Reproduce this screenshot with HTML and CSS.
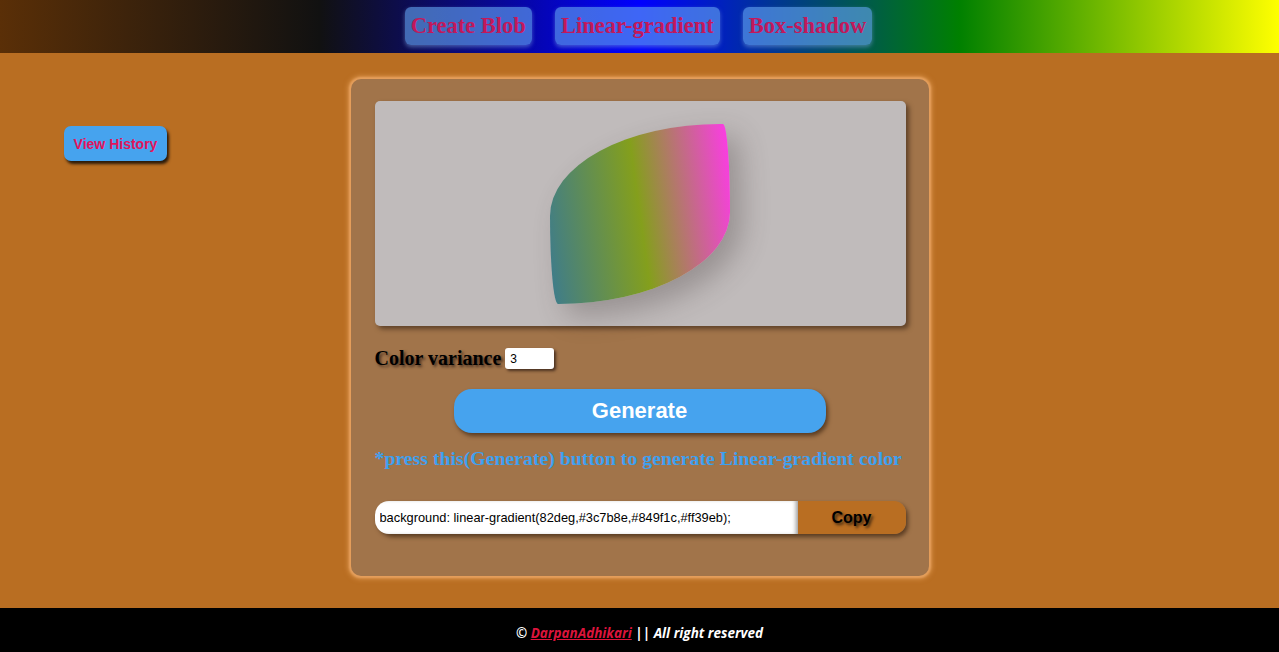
FILE: index.html
```html
<!DOCTYPE html>
<html lang="en">
<head>
<meta charset="utf-8">
<title>Linear-gradient</title>
<link rel="stylesheet" href="styles.css">
</head>
<body>
<header class="topbar">
  <a class="nav-btn" href="#">Create Blob</a>
  <a class="nav-btn" href="#">Linear-gradient</a>
  <a class="nav-btn" href="#">Box-shadow</a>
</header>
<main class="main">
  <div class="side">
    <button class="history-btn">View History</button>
  </div>
  <section class="panel">
    <div class="preview">
      <div class="blob"></div>
    </div>
    <div class="variance">
      <label class="variance-label" for="cv">Color variance</label>
      <input class="variance-input" id="cv" type="text" value="3">
    </div>
    <div class="gen-row">
      <button class="gen-btn">Generate</button>
    </div>
    <p class="hint">*press this(Generate) button to generate Linear-gradient color</p>
    <div class="code-row">
      <input class="code-input" type="text" value="background: linear-gradient(82deg,#3c7b8e,#849f1c,#ff39eb);">
      <button class="copy-btn">Copy</button>
    </div>
  </section>
  <div class="side"></div>
</main>
<footer class="footer">
  <span>© <a class="footer-link" href="#"> DarpanAdhikari</a> || All right reserved</span>
</footer>
</body>
</html>
```

FILE: styles.css
```css
* { box-sizing: border-box; }
html, body { margin: 0; padding: 0; }
body {
  background: #b96e22;
  font-family: "Liberation Serif", "Times New Roman", serif;
  height: 652px;
  overflow: hidden;
}
.topbar {
  height: 53px;
  background: linear-gradient(to right, #5a2f07, #111111 25%, #0000ff 50%, #008000 75%, #ffff00);
  display: flex;
  justify-content: center;
  align-items: flex-start;
  gap: 23px;
  padding-top: 7px;
  padding-right: 2px;
}
.nav-btn {
  display: block;
  height: 38px;
  line-height: 37px;
  padding: 0 6px;
  border-radius: 6px;
  background: rgba(100, 165, 240, 0.62);
  box-shadow: 0 2px 4px rgba(120, 160, 220, 0.55);
  color: #c2185b;
  font-family: "Liberation Serif", "Times New Roman", serif;
  font-weight: bold;
  font-size: 22.5px;
  text-decoration: none;
}
.main {
  height: 555px;
  display: grid;
  grid-template-columns: 1fr 578px 1fr;
  align-items: start;
  padding-top: 26px;
}
.side { padding-left: 64px; padding-top: 47px; }
.history-btn {
  width: 103px;
  height: 35px;
  border: none;
  border-radius: 7px;
  background: #46a3ee;
  color: #e3135c;
  font-family: "Liberation Sans", Arial, sans-serif;
  font-weight: bold;
  font-size: 14px;
  box-shadow: 2px 3px 3px #2a1a0a;
  padding: 0;
}
.panel {
  width: 578px;
  height: 497px;
  background: #a1744a;
  border-radius: 10px;
  box-shadow: 0 0 2px 2px #e59f5c, 0 0 5px 3px rgba(240, 170, 100, 0.6);
  padding: 22px 23px 0 24px;
}
.preview {
  height: 225px;
  background: #c0bbbb;
  border-radius: 5px;
  box-shadow: 3px 3px 5px #5e4128;
  display: flex;
  align-items: center;
  justify-content: center;
}
.blob {
  width: 180px;
  height: 180px;
  background: linear-gradient(82deg, #3c7b8e, #849f1c, #ff39eb);
  border-radius: 170px 7px 172px 8px / 92px 88px 92px 88px;
  box-shadow: 12px 12px 28px rgba(60, 50, 50, 0.3);
}
.variance {
  display: flex;
  align-items: center;
  gap: 4px;
  margin-top: 21px;
  height: 23px;
}
.variance-label {
  font-weight: bold;
  font-size: 20px;
  color: #000;
  text-shadow: 2px 2px 3px #4a3020;
}
.variance-input {
  width: 49px;
  height: 21px;
  border: none;
  border-radius: 3px;
  background: #fff;
  box-shadow: 2px 2px 3px #4a3020;
  font-family: "Liberation Sans", Arial, sans-serif;
  font-size: 12px;
  padding: 2px 5px;
  outline: none;
}
.gen-row {
  display: flex;
  justify-content: center;
  margin-top: 19px;
  padding-right: 1px;
}
.gen-btn {
  width: 372px;
  height: 44px;
  border: none;
  border-radius: 18px;
  background: #46a3ee;
  color: #fff;
  font-family: "Liberation Sans", Arial, sans-serif;
  font-weight: bold;
  font-size: 22px;
  box-shadow: 2px 3px 4px #5a3c22;
  padding: 0;
}
.hint {
  margin: 14px 0 0 0;
  font-weight: bold;
  font-size: 19.8px;
  color: #3ea0f0;
  line-height: 22px;
  white-space: nowrap;
}
.code-row {
  display: flex;
  margin-top: 32px;
  width: 531px;
  height: 33px;
  box-shadow: 2px 3px 4px #5a3c22;
  border-radius: 17px 12px 12px 17px;
}
.code-input {
  width: 423px;
  height: 33px;
  border: none;
  border-radius: 14px 0 0 14px;
  background: #fff;
  font-family: "Liberation Sans", Arial, sans-serif;
  font-size: 12.8px;
  color: #000;
  padding: 0 5px;
  outline: none;
  box-shadow: inset -4px 0 4px -2px #999;
}
.copy-btn {
  flex: 1;
  height: 33px;
  border: none;
  border-radius: 0 12px 12px 0;
  background: #b96e22;
  color: #000;
  font-family: "Liberation Sans", Arial, sans-serif;
  font-weight: bold;
  font-size: 16px;
  text-shadow: 2px 2px 3px #3a2410;
  padding: 0;
}
.footer {
  height: 44px;
  background: #000;
  display: flex;
  align-items: center;
  justify-content: center;
  padding-top: 6px;
  color: #fff;
  font-family: "Open Sans", "Noto Sans", sans-serif;
  font-style: italic;
  font-weight: bold;
  font-size: 13.5px;
}
.footer-link { color: #dc143c; }
```
